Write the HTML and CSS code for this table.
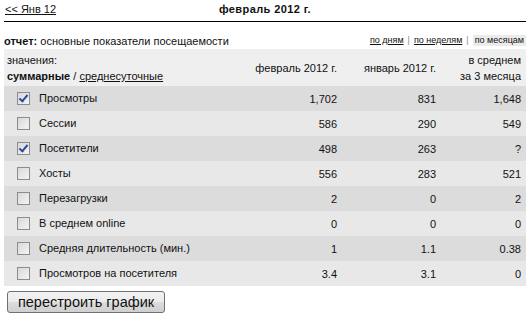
FILE: index.html
```html
<!DOCTYPE html>
<html>
<head>
<meta charset="utf-8">
<link rel="stylesheet" href="styles.css">
</head>
<body>
<div class="page">
  <div class="topbar">
    <a class="prev" href="#">&lt;&lt; Янв 12</a>
    <div class="title">февраль 2012 г.</div>
    <div></div>
  </div>
  <div class="report">
    <div class="report-name"><b>отчет:</b> основные показатели посещаемости</div>
    <div class="periods"><a href="#">по дням</a><span class="sep">|</span><a href="#">по неделям</a><span class="sep">|</span><span class="cur">по месяцам</span></div>
  </div>
  <table class="stats">
    <thead>
      <tr>
        <th class="lbl">значения:<br><b>суммарные</b> / <a href="#">среднесуточные</a></th>
        <th class="num c1">февраль 2012 г.</th>
        <th class="num c2">январь 2012 г.</th>
        <th class="num c3">в среднем<br>за 3 месяца</th>
      </tr>
    </thead>
    <tbody>
      <tr class="dark"><td class="lbl"><span class="cb on"></span>Просмотры</td><td class="num">1,702</td><td class="num">831</td><td class="num">1,648</td></tr>
      <tr class="light"><td class="lbl"><span class="cb"></span>Сессии</td><td class="num">586</td><td class="num">290</td><td class="num">549</td></tr>
      <tr class="dark"><td class="lbl"><span class="cb on"></span>Посетители</td><td class="num">498</td><td class="num">263</td><td class="num">?</td></tr>
      <tr class="light"><td class="lbl"><span class="cb"></span>Хосты</td><td class="num">556</td><td class="num">283</td><td class="num">521</td></tr>
      <tr class="dark"><td class="lbl"><span class="cb"></span>Перезагрузки</td><td class="num">2</td><td class="num">0</td><td class="num">2</td></tr>
      <tr class="light"><td class="lbl"><span class="cb"></span>В среднем online</td><td class="num">0</td><td class="num">0</td><td class="num">0</td></tr>
      <tr class="dark"><td class="lbl"><span class="cb"></span>Средняя длительность (мин.)</td><td class="num">1</td><td class="num">1.1</td><td class="num">0.38</td></tr>
      <tr class="light"><td class="lbl"><span class="cb"></span>Просмотров на посетителя</td><td class="num">3.4</td><td class="num">3.1</td><td class="num">0</td></tr>
    </tbody>
  </table>
  <div class="actions"><button class="rebuild">перестроить график</button></div>
</div>
</body>
</html>
```

FILE: styles.css
```css
html, body {
  margin: 0;
  padding: 0;
  background: #fff;
}
body {
  font-family: "Liberation Sans", Arial, sans-serif;
  font-size: 11px;
  color: #111;
}
a { color: #111; text-decoration: underline; }
.page {
  margin: 0 4px;
}
.topbar {
  display: grid;
  grid-template-columns: 1fr auto 1fr;
  align-items: start;
  height: 22px;
  padding-top: 2px;
  box-sizing: border-box;
  line-height: 14px;
  border-bottom: 1px solid #000;
}
.prev { padding-left: 1px; }
.title { font-weight: bold; letter-spacing: 0.4px; }
.report {
  display: flex;
  justify-content: space-between;
  align-items: flex-end;
  height: 27px;
  box-sizing: border-box;
  padding-bottom: 1px;
  line-height: 14px;
}
.periods {
  font-size: 9px;
  line-height: 11px;
  display: flex;
  align-items: center;
  padding-bottom: 2px;
}
.periods .sep {
  color: #9b7c9b;
  margin: 0 4px;
}
.periods .cur {
  background: #ebebeb;
  padding: 0 2px 0 2px;
}
.stats {
  width: 100%;
  border-collapse: collapse;
  border-spacing: 0;
}
.stats th {
  background: #efefef;
  font-weight: normal;
  line-height: 16px;
  height: 37px;
  padding: 3px 5px 2px 3px;
  box-sizing: border-box;
  vertical-align: middle;
}
.stats th.lbl { text-align: left; }
.stats th b { font-weight: bold; }
.stats td {
  height: 25px;
  padding: 0 5px 0 0;
  box-sizing: border-box;
  vertical-align: middle;
}
.stats .num { text-align: right; }
.c1 { width: 99px; }
.c2 { width: 99px; }
.c3 { width: 85px; }
.stats td.lbl {
  padding-left: 13px;
  text-align: left;
}
tr.dark td { background: #dcdcdc; }
tr.light td { background: #e8e8e8; }
.cb {
  display: inline-block;
  width: 13px;
  height: 13px;
  box-sizing: border-box;
  border: 1px solid #8c8c8c;
  background: linear-gradient(135deg, #d8d8d8 0%, #f4f4f4 100%);
  vertical-align: -3px;
  margin-right: 9px;
  position: relative;
}
.cb.on::after {
  content: "";
  position: absolute;
  left: 3px;
  top: 0px;
  width: 3px;
  height: 7px;
  border: solid #2c4d9e;
  border-width: 0 2px 2px 0;
  transform: rotate(40deg);
}
.actions {
  padding: 5px 0 0 3px;
}
.rebuild {
  font-family: "Liberation Sans", Arial, sans-serif;
  font-size: 14.5px;
  height: 22px;
  width: 158px;
  padding: 0;
  border: 1px solid #707070;
  border-radius: 3px;
  background: linear-gradient(#f2f2f2 0%, #ebebeb 50%, #dddddd 51%, #cfcfcf 100%);
  color: #111;
  line-height: 18px;
}
```
